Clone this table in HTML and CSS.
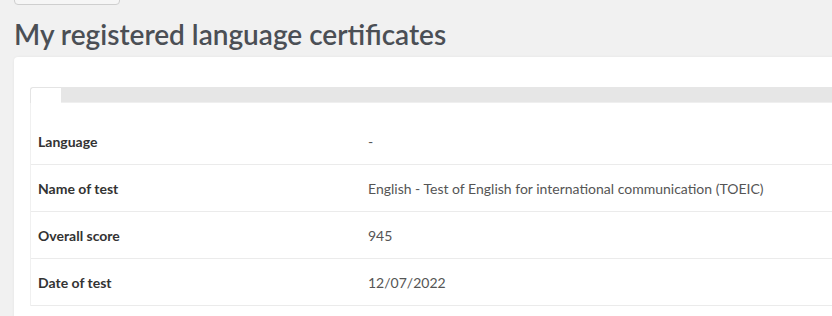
FILE: index.html
```html
<!DOCTYPE html>
<html lang="en">
<head>
<meta charset="utf-8">
<title>Language certificates</title>
<link rel="stylesheet" href="styles.css">
</head>
<body>
<div class="page">
  <div class="toolbar">
    <button class="back-btn" type="button" aria-label="Back"></button>
  </div>
  <h1 class="page-title">My registered language certificates</h1>
  <section class="card">
    <div class="tabs">
      <div class="tab active"></div>
      <div class="tab-rest"></div>
    </div>
    <div class="tab-panel">
      <div class="row">
        <div class="label">Language</div>
        <div class="value">-</div>
      </div>
      <div class="row">
        <div class="label">Name of test</div>
        <div class="value">English - Test of English for international communication (TOEIC)</div>
      </div>
      <div class="row">
        <div class="label">Overall score</div>
        <div class="value">945</div>
      </div>
      <div class="row">
        <div class="label">Date of test</div>
        <div class="value">12/07/2022</div>
      </div>
    </div>
  </section>
</div>
</body>
</html>
```

FILE: styles.css
```css
html, body {
  margin: 0;
  padding: 0;
}

body {
  background: #f1f1f1;
  font-family: Lato, "Open Sans", sans-serif;
  color: #555;
  overflow: hidden;
}

.page {
  padding: 0 0 0 14px;
  width: 900px;
}

/* the button row is scrolled mostly out of view; only its lower edge shows */
.toolbar {
  height: 5px;
  display: flex;
  align-items: flex-end;
}

.back-btn {
  flex: none;
  width: 106px;
  height: 30px;
  background: #f6f6f6;
  border: 1px solid #cfcfcf;
  border-radius: 4px;
}

.page-title {
  margin: 10px 0 0;
  font-size: 28px;
  font-weight: 600;
  line-height: 38px;
  color: #4b4f55;
}

.card {
  margin-top: 4px;
  background: #fff;
  border-radius: 4px 0 0 4px;
  box-shadow: 0 0 3px rgba(0, 0, 0, 0.06);
  padding: 30px 0 0 16px;
  height: 300px;
}

.tabs {
  display: flex;
  height: 16px;
}

.tab {
  width: 30px;
  background: #fff;
  border: 1px solid #e4e4e4;
  border-bottom: none;
  border-right: none;
  border-radius: 3px 0 0 0;
}

.tab-rest {
  flex: 1;
  background: #e6e6e6;
  border-bottom: 1px solid #efefef;
}

.tab-panel {
  border-left: 1px solid #f0f0f0;
  padding-top: 15px;
}

.row {
  display: flex;
  align-items: center;
  height: 46px;
  border-bottom: 1px solid #ebebeb;
  font-size: 14px;
}

.label {
  width: 330px;
  padding-left: 7px;
  font-weight: 700;
  color: #333;
}

.value {
  color: #555;
}
```
